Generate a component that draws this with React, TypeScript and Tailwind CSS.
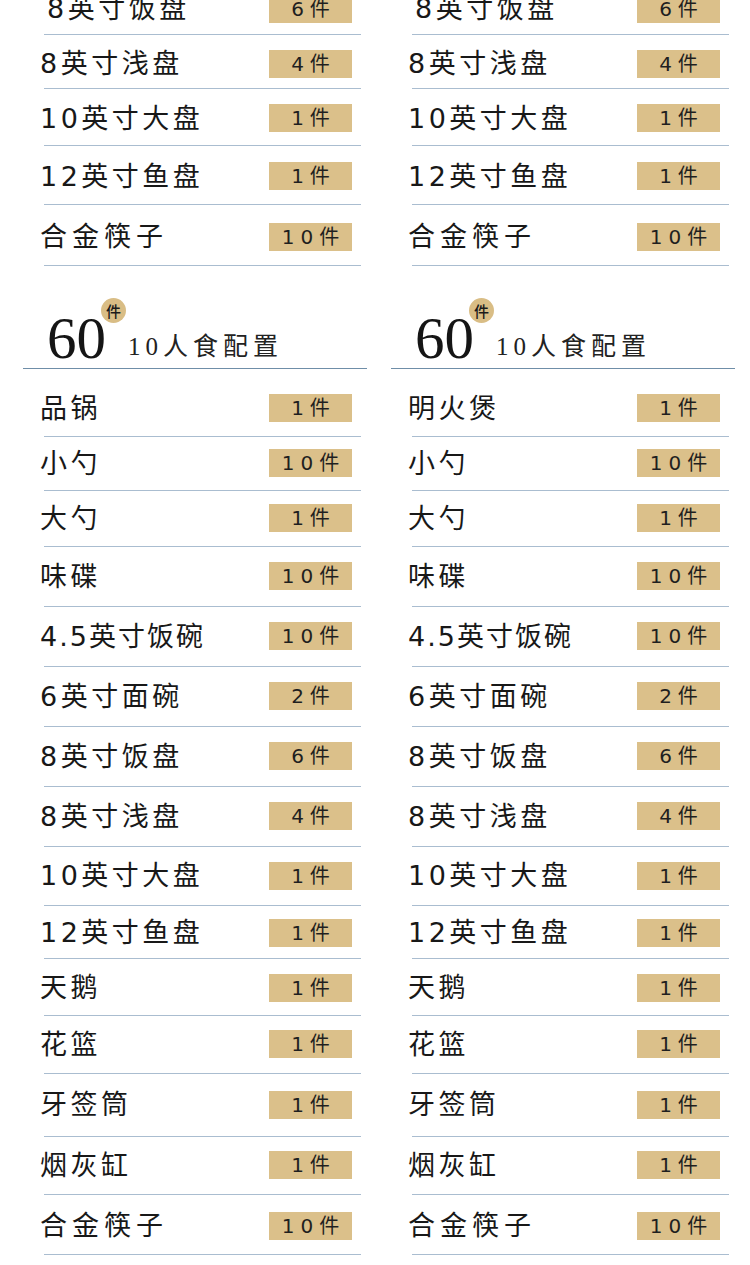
import React from "react";

type Item = { name: string; qty: string; h: string; extra?: string; track?: string };

const topRows: Item[] = [
  { name: "8英寸饭盘", qty: "6件", h: "h-[55px] -mt-[20px]", extra: "pl-[24px] pt-[4px]" },
  { name: "8英寸浅盘", qty: "4件", h: "h-[54px]", extra: "pt-[5px]" },
  { name: "10英寸大盘", qty: "1件", h: "h-[57px]", extra: "pt-[3px]" },
  { name: "12英寸鱼盘", qty: "1件", h: "h-[59px]", extra: "pt-[3px]" },
  { name: "合金筷子", qty: "10件", h: "h-[61px]", extra: "pt-[4px]", track: "tracking-[5px]" },
];

const mkRows = (first: string): Item[] => [
  { name: first, qty: "1件", h: "h-[68px]", extra: "pt-[12px]" },
  { name: "小勺", qty: "10件", h: "h-[54px]" },
  { name: "大勺", qty: "1件", h: "h-[56px]" },
  { name: "味碟", qty: "10件", h: "h-[60px]" },
  { name: "4.5英寸饭碗", qty: "10件", h: "h-[60px]", track: "tracking-[2px]" },
  { name: "6英寸面碗", qty: "2件", h: "h-[60px]" },
  { name: "8英寸饭盘", qty: "6件", h: "h-[60px]" },
  { name: "8英寸浅盘", qty: "4件", h: "h-[60px]" },
  { name: "10英寸大盘", qty: "1件", h: "h-[59px]" },
  { name: "12英寸鱼盘", qty: "1件", h: "h-[53px]", extra: "pt-[2px]" },
  { name: "天鹅", qty: "1件", h: "h-[57px]", extra: "pt-[2px]" },
  { name: "花篮", qty: "1件", h: "h-[58px]" },
  { name: "牙签筒", qty: "1件", h: "h-[63px]" },
  { name: "烟灰缸", qty: "1件", h: "h-[58px]" },
  { name: "合金筷子", qty: "10件", h: "h-[60px]", extra: "pt-[3px]", track: "tracking-[5px]" },
];

function Row({ item }: { item: Item }) {
  return (
    <div className={`flex flex-col shrink-0 ${item.h}`}>
      <div className={`flex-1 flex items-center justify-between pl-[17px] pr-[15px] ${item.extra ?? ""}`}>
        <span
          className={`font-['DejaVu_Sans','Noto_Sans_CJK_SC',sans-serif] text-[27px] leading-none text-[#181818] ${
            item.track ?? "tracking-[3.5px]"
          }`}
        >
          {item.name}
        </span>
        <span className="w-[83px] h-[28px] bg-[#dbc08a] flex items-center justify-center font-['DejaVu_Sans','Noto_Sans_CJK_SC',sans-serif] text-[20px] leading-none tracking-[6px] pl-[6px] text-[#1f1f1f]">
          {item.qty}
        </span>
      </div>
      <div className="ml-[21px] w-[317px] h-[1.5px] bg-[#aabdd0] shrink-0" />
    </div>
  );
}

function Header() {
  return (
    <div className="flex flex-col h-[103px] shrink-0">
      <div className="flex-1 flex items-end pl-[24px]">
        <div className="relative">
          <span className="block font-['Liberation_Serif',serif] text-[59px] leading-none text-[#151515]">60</span>
          <span className="absolute left-[54px] -top-[11px] w-[25px] h-[25px] rounded-full bg-[#d9bd85] flex items-center justify-center font-['Noto_Sans_CJK_SC',sans-serif] font-medium text-[15px] leading-none text-[#1a1a1a]">
            件
          </span>
        </div>
        <span className="ml-[22px] mb-[9px] font-['Liberation_Serif','Noto_Sans_CJK_SC',serif] text-[25px] leading-none tracking-[5px] text-[#222]">
          10人食配置
        </span>
      </div>
      <div className="w-[344px] h-[1.5px] bg-[#6f8ea8] shrink-0" />
    </div>
  );
}

function Column({ first }: { first: string }) {
  return (
    <div className="w-[344px] flex flex-col shrink-0">
      {topRows.map((r, i) => (
        <Row key={"t" + i} item={r} />
      ))}
      <Header />
      {mkRows(first).map((r, i) => (
        <Row key={"b" + i} item={r} />
      ))}
    </div>
  );
}

export default function App() {
  return (
    <div className="w-[750px] h-[1265px] overflow-hidden bg-white flex gap-[24px] pl-[23px]">
      <Column first="品锅" />
      <Column first="明火煲" />
    </div>
  );
}
